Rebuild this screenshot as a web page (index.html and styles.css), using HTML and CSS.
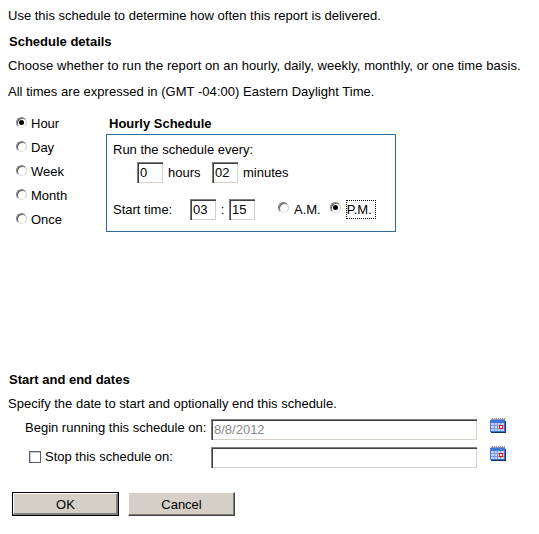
FILE: index.html
```html
<!DOCTYPE html>
<html lang="en">
<head>
<meta charset="utf-8">
<title>Schedule</title>
<link rel="stylesheet" href="styles.css">
</head>
<body>
<main class="page">
  <p class="line intro">Use this schedule to determine how often this report is delivered.</p>
  <h2 class="heading details-heading">Schedule details</h2>
  <p class="line choose">Choose whether to run the report on an hourly, daily, weekly, monthly, or one time basis.</p>
  <p class="line times">All times are expressed in (GMT -04:00) Eastern Daylight Time.</p>

  <section class="schedule">
    <div class="freq">
      <label class="freq-item"><span class="radio on"></span>Hour</label>
      <label class="freq-item"><span class="radio"></span>Day</label>
      <label class="freq-item"><span class="radio"></span>Week</label>
      <label class="freq-item"><span class="radio"></span>Month</label>
      <label class="freq-item"><span class="radio"></span>Once</label>
    </div>
    <div class="hourly">
      <h3 class="heading hourly-heading">Hourly Schedule</h3>
      <div class="box">
        <div class="box-title">Run the schedule every:</div>
        <div class="every">
          <span class="field small">0</span><span class="unit-hours">hours</span>
          <span class="field small">02</span><span class="unit-min">minutes</span>
        </div>
        <div class="start">
          <span class="start-label">Start time:</span>
          <span class="field small">03</span><span class="colon">:</span><span class="field small">15</span>
          <label class="ampm am"><span class="radio"></span>A.M.</label>
          <label class="ampm pm"><span class="radio on"></span><span class="focus">P.M.</span></label>
        </div>
      </div>
    </div>
  </section>

  <h2 class="heading dates-heading">Start and end dates</h2>
  <p class="line specify">Specify the date to start and optionally end this schedule.</p>
  <div class="date-row begin">
    <span class="date-label begin-label">Begin running this schedule on:</span>
    <span class="field wide disabled">8/8/2012</span>
    <svg class="cal" viewBox="0 0 16 15" width="16" height="15" aria-hidden="true"><rect x="1" y="0" width="14" height="2" fill="#8a94b0"/><path d="M1 0h1v1H1zM3 0h1v1H3zM5 0h1v1H5zM7 0h1v1H7zM9 0h1v1H9zM11 0h1v1h-1zM13 0h1v1h-1z" fill="#fff"/><rect x="0" y="2" width="15" height="12" fill="#3d78d8"/><rect x="15" y="3" width="1" height="12" fill="#1a2f66"/><rect x="1" y="14" width="15" height="1" fill="#1a2f66"/><rect x="1" y="5" width="13" height="8" fill="#c4d4f2"/><path d="M4.500 5v8M7.500 5v8M10.500 5v8M1 7.500h13M1 10.500h13" stroke="#7d9be0" fill="none"/><rect x="9.500" y="7.500" width="3" height="3" fill="#fff" stroke="#f01010"/></svg>
  </div>
  <div class="date-row stop">
    <label class="date-label stop-label"><span class="check"></span>Stop this schedule on:</label>
    <span class="field wide"></span>
    <svg class="cal" viewBox="0 0 16 15" width="16" height="15" aria-hidden="true"><rect x="1" y="0" width="14" height="2" fill="#8a94b0"/><path d="M1 0h1v1H1zM3 0h1v1H3zM5 0h1v1H5zM7 0h1v1H7zM9 0h1v1H9zM11 0h1v1h-1zM13 0h1v1h-1z" fill="#fff"/><rect x="0" y="2" width="15" height="12" fill="#3d78d8"/><rect x="15" y="3" width="1" height="12" fill="#1a2f66"/><rect x="1" y="14" width="15" height="1" fill="#1a2f66"/><rect x="1" y="5" width="13" height="8" fill="#c4d4f2"/><path d="M4.500 5v8M7.500 5v8M10.500 5v8M1 7.500h13M1 10.500h13" stroke="#7d9be0" fill="none"/><rect x="9.500" y="7.500" width="3" height="3" fill="#fff" stroke="#f01010"/></svg>
  </div>
  <div class="actions">
    <button class="btn default" type="button">OK</button>
    <button class="btn" type="button">Cancel</button>
  </div>
</main>
</body>
</html>
```
FILE: styles.css
```css
* { box-sizing: border-box; }
html, body { margin: 0; padding: 0; background: #fff; }
body { font: 13px/14px "Liberation Sans", Arial, sans-serif; color: #000; }
.page { padding: 9px 0 0 8px; width: 539px; height: 534px; overflow: hidden; }
.line { margin: 0; }
.heading { margin: 0; font-size: 13px; line-height: 14px; font-weight: bold; }
.details-heading { margin: 12px 0 0 1px; }
.choose { margin-top: 10px; letter-spacing: .08px; }
.times { margin-top: 12px; letter-spacing: .03px; }

.schedule { display: flex; margin-top: 13px; }
.freq { display: flex; flex-direction: column; width: 98px; padding-left: 8px; }
.freq-item { display: flex; align-items: center; height: 24px; }
.freq-item .radio { margin-right: 4px; position: relative; top: -2px; }

.radio { display: inline-block; flex: none; width: 11px; height: 11px; border-radius: 50%; background: #fff; border: 1px solid; border-color: #808080 #d4d0c8 #e8e6e0 #808080; box-shadow: inset 1px 1px 0 #606060; position: relative; }
.radio.on::after { content: ""; position: absolute; left: 2px; top: 2px; width: 5px; height: 5px; border-radius: 50%; background: #000; }

.hourly { width: 290px; padding-top: 5px; }
.hourly-heading { margin-left: 3px; }
.box { margin-top: 3px; width: 290px; height: 98px; border: 1px solid #2f6a9e; padding: 8px 6px 0; }
.box-title { height: 14px; }
.every { display: flex; align-items: center; margin: 5px 0 0 24px; }
.unit-hours { width: 49px; padding-left: 5px; }
.unit-min { margin-left: 5px; }
.start { display: flex; align-items: center; margin-top: 16px; }
.start-label { width: 77px; }
.colon { width: 13px; text-align: center; }
.ampm { display: flex; align-items: center; }
.am { margin-left: 23px; }
.am .radio { margin-right: 5px; position: relative; top: -2px; }
.pm .radio { margin-right: 6px; position: relative; top: -2px; }
.pm { margin-left: 9px; }
.focus { outline: 1px dotted #000; outline-offset: 0; padding: 1px 0; display: block; line-height: 15px; width: 28px; white-space: nowrap; }

.field { display: block; height: 21px; background: #fff; padding: 3px 0 0 3px; line-height: 15px; flex: none; box-shadow: inset 1px 1px 0 #808080, inset 2px 2px 0 #404040, inset -1px -1px 0 #d4d0c8; }
.small { width: 26px; }
.wide { width: 266px; }
.disabled { color: #888; }

.dates-heading { margin: 141px 0 0 1px; }
.specify { margin-top: 10px; }
.date-row { display: flex; align-items: flex-start; }
.begin { margin-top: 8px; }
.stop { margin-top: 7px; }
.date-label { display: flex; align-items: center; width: 203px; height: 16px; }
.begin-label { padding-left: 17px; margin-top: 1px; }
.stop-label { padding-left: 21px; margin-top: 2px; }
.check { display: inline-block; width: 12px; height: 12px; margin-right: 4px; border: 1px solid #5c5c6a; box-shadow: inset 1px 1px 0 #c8c8d0; background: #fff; }
.cal { margin: -1px 0 0 13px; flex: none; }

.actions { display: flex; gap: 9px; margin: 24px 0 0 4px; }
.btn { width: 107px; height: 24px; background: #d4d0c8; font: 13px "Liberation Sans", Arial, sans-serif; color: #000; border: 1px solid; border-color: #fff #404040 #404040 #fff; box-shadow: inset -1px -1px 0 #808080; padding: 0; margin: 0; }
.default { border: 1px solid #000; box-shadow: inset -1px -1px 0 #808080, inset 1px 1px 0 #fff, inset -2px -2px 0 #808080; }
```
